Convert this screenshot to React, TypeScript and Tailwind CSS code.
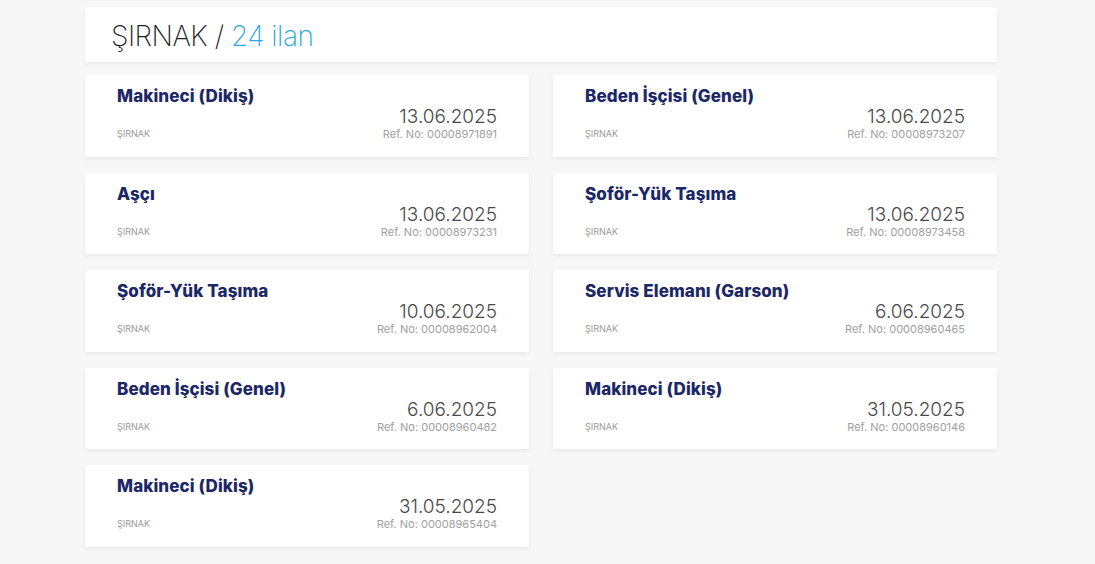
import React from 'react';

type Job = {
  title: string;
  date: string;
  ref: string;
};

const jobs: Job[] = [
  { title: 'Makineci (Dikiş)', date: '13.06.2025', ref: '00008971891' },
  { title: 'Beden İşçisi (Genel)', date: '13.06.2025', ref: '00008973207' },
  { title: 'Aşçı', date: '13.06.2025', ref: '00008973231' },
  { title: 'Şoför-Yük Taşıma', date: '13.06.2025', ref: '00008973458' },
  { title: 'Şoför-Yük Taşıma', date: '10.06.2025', ref: '00008962004' },
  { title: 'Servis Elemanı (Garson)', date: '6.06.2025', ref: '00008960465' },
  { title: 'Beden İşçisi (Genel)', date: '6.06.2025', ref: '00008960482' },
  { title: 'Makineci (Dikiş)', date: '31.05.2025', ref: '00008960146' },
  { title: 'Makineci (Dikiş)', date: '31.05.2025', ref: '00008965404' },
];

const JobCard: React.FC<{ job: Job }> = ({ job }) => (
  <div className="flex h-[81.5px] flex-col bg-white px-8 pt-[9px] shadow-[0_2px_4px_rgba(0,0,0,0.06)]">
    <p className="text-[17px] font-extrabold leading-6 tracking-[0.1px] text-[#1b2766]">{job.title}</p>
    <div className="-mt-px flex items-end justify-between">
      <span className="mb-px text-[9px] leading-3 uppercase text-[#9a9a9a]">ŞIRNAK</span>
      <div className="flex flex-col items-end">
        <span className="text-[19px] font-light leading-5 text-[#4a4a4a]">{job.date}</span>
        <span className="text-[11px] leading-[14px] text-[#a0a0a0]">Ref. No: {job.ref}</span>
      </div>
    </div>
  </div>
);

export default function App() {
  return (
    <div
      className="min-h-screen bg-[#f7f7f7]"
      style={{ fontFamily: 'Inter, "Noto Sans", sans-serif' }}
    >
      <div className="w-[912px] pt-[7px] pb-4" style={{ marginLeft: 85 }}>
        <div className="flex h-[55px] items-center bg-white px-[26px] pt-[3px] shadow-[0_2px_4px_rgba(0,0,0,0.05)]">
          <h1 className="text-[28px] font-extralight leading-none tracking-[-0.5px] text-[#222]">
            ŞIRNAK / <span className="text-[#2ba6df]">24 ilan</span>
          </h1>
        </div>
        <div className="mt-[13px] grid grid-cols-2 gap-x-6 gap-y-4">
          {jobs.map((job, i) => (
            <JobCard key={i} job={job} />
          ))}
        </div>
      </div>
    </div>
  );
}
